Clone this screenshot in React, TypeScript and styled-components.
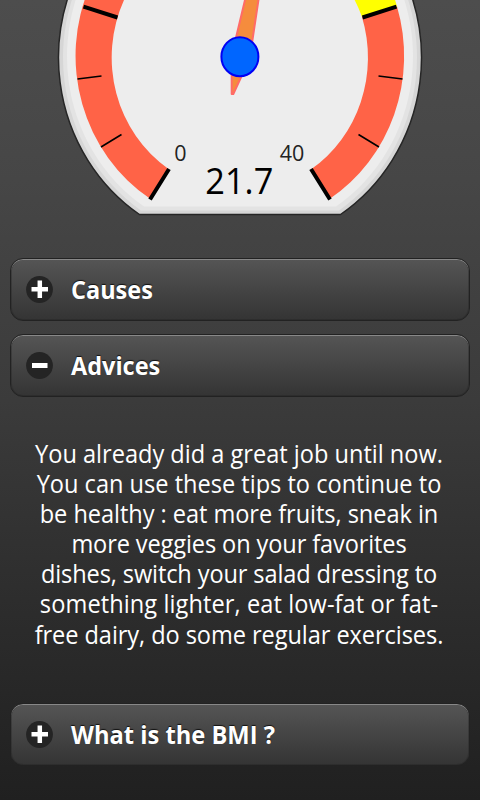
import React from "react";
import styled, { createGlobalStyle } from "styled-components";

const GlobalStyle = createGlobalStyle`
  body { margin: 0; background: #222; }
`;

const Page = styled.main`
  box-sizing: border-box;
  width: 480px;
  height: 800px;
  overflow: hidden;
  display: flex;
  flex-direction: column;
  background: linear-gradient(#4d4d4d 0, #464646 180px, #3b3b3b 400px, #2d2d2d 600px, #202020 800px);
  color: #fff;
  font-family: "Open Sans", "Noto Sans", sans-serif;
`;

const Gauge = styled.svg`
  display: block;
  flex: none;
  width: 480px;
  height: 258px;
`;

const Header = styled.button`
  box-sizing: border-box;
  flex: none;
  display: flex;
  align-items: center;
  gap: 18px;
  width: 460px;
  height: 63px;
  margin: 0 0 13px 10px;
  padding: 0 0 0 15px;
  border: 1px solid #222;
  border-radius: 13px;
  background: linear-gradient(#555, #343434);
  box-shadow: inset 0 1px 0 #888, inset 0 0 0 1px rgba(35, 35, 35, 0.35);
  color: #fff;
  font: inherit;
  text-align: left;
`;

const Icon = styled.svg`
  width: 27px;
  height: 27px;
  flex: none;
`;

const Title = styled.span<{ $scale: number }>`
  font-size: 25px;
  font-weight: 700;
  line-height: 30px;
  padding-bottom: 2px;
  white-space: nowrap;
  transform: scaleX(${(p) => p.$scale});
  transform-origin: left center;
  text-shadow: 0 -1.5px 1px #111;
`;

const Advice = styled.p`
  flex: none;
  box-sizing: border-box;
  height: 293px;
  margin: 0;
  padding: 28px 2px 0 0;
  font-size: 25px;
  line-height: 30.1px;
  text-align: center;
`;

const Line = styled.span<{ $spacing: number }>`
  display: block;
  white-space: nowrap;
  letter-spacing: ${(p) => p.$spacing}px;
  transform: scaleX(0.943);
`;

const lines = [
  { text: "You already did a great job until now.", spacing: 0 },
  { text: "You can use these tips to continue to", spacing: 0 },
  { text: "be healthy : eat more fruits, sneak in", spacing: -0.05 },
  { text: "more veggies on your favorites", spacing: -0.12 },
  { text: "dishes, switch your salad dressing to", spacing: -0.12 },
  { text: "something lighter, eat low-fat or fat-", spacing: 0.1 },
  { text: "free dairy, do some regular exercises.", spacing: -0.07 },
];

function Toggle({ title, open = false, scale = 0.94 }: { title: string; open?: boolean; scale?: number }) {
  return (
    <Header>
      <Icon viewBox="0 0 27 27">
        <circle cx="13.5" cy="13.5" r="13.4" fill="#242424" />
        <path d={open ? "M6 13.5H21.5" : "M5.5 13.2H22M13.8 4.5V22"} stroke="#fff" strokeWidth={open ? 5 : 4.5} />
      </Icon>
      <Title $scale={scale}>{title}</Title>
    </Header>
  );
}

function BmiGauge() {
  return (
    <Gauge viewBox="0 0 480 258">
      <path d="M139.5 214.5A181.5 188.5 0 1 1 340.5 214.5Z" fill="#d6d6d6" stroke="#262626" strokeWidth="1.5" />
      <path d="M141 210.5A177 184.5 0 1 1 339 210.5Z" fill="#e3e3e3" />
      <path d="M144 206.5A173 180.5 0 1 1 336 206.5Z" fill="#ededed" />
      <path d="M150.5 199A164.3 170.5 0 0 1 90 -14L124 0A127.5 134 0 0 0 168.5 169Z" fill="#ff6347" />
      <path d="M329.5 199A164.3 170.5 0 0 0 397 6.5L362 17A127 134 0 0 1 311.5 169Z" fill="#ff6347" />
      <path d="M397 6.5A164.3 170.5 0 0 0 385 -25L349 -10A128 134 0 0 1 362 17Z" fill="#ffff00" />
      <g fill="none" stroke="#000" strokeWidth="4">
        <path d="M83.5 6.7L117.5 17.5M396.5 6.7L362.5 17.5M150 199.5L169 169M330 199.5L311 169" />
        <path d="M77.5 79L101.5 76M402.5 79L378.5 76M101 147L121.5 134.5M379 147L358.5 134.5" strokeWidth="1.6" />
      </g>
      <path d="M246.2 -5L235 42L231.7 67V94H233.3L242.5 74L252 43L259.2 -5Z" fill="#f58c3d" stroke="#ff6b67" strokeWidth="2" strokeLinejoin="round" />
      <ellipse cx="239.9" cy="56.7" rx="18.5" ry="19.5" fill="#0066ff" stroke="#0000f5" strokeWidth="2" />
      <g textAnchor="middle" fontFamily='"Open Sans", "Noto Sans", sans-serif'>
        <text x="180.3" y="160.8" fontSize="21.5" fill="#222">0</text>
        <text x="292" y="160.8" fontSize="21.5" fill="#222">40</text>
        <text x="239.3" y="194" fontSize="37" fill="#000" textLength="68" lengthAdjust="spacingAndGlyphs">21.7</text>
      </g>
    </Gauge>
  );
}

export default function App() {
  return (
    <Page>
      <GlobalStyle />
      <BmiGauge />
      <Toggle title="Causes" />
      <Toggle title="Advices" open />
      <Advice>
        {lines.map((l) => (
          <Line key={l.text} $spacing={l.spacing}>{l.text}</Line>
        ))}
      </Advice>
      <Toggle title="What is the BMI ?" scale={0.948} />
    </Page>
  );
}
